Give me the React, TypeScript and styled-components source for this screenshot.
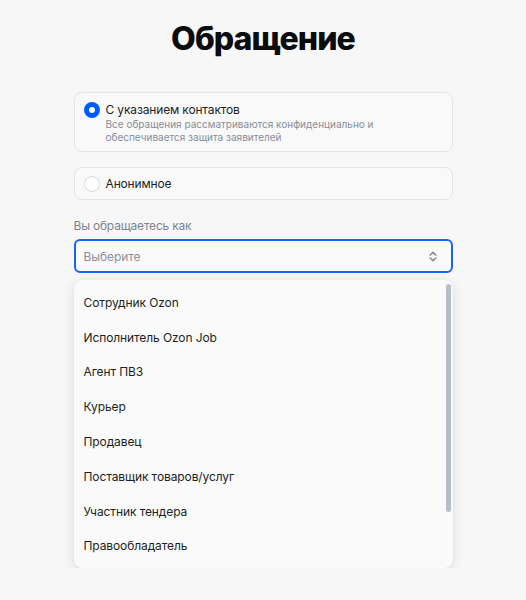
import React from 'react';
import styled, { createGlobalStyle } from 'styled-components';

const GlobalStyle = createGlobalStyle`
    body {
        margin: 0;
        background: #f7f7f8;
        font-family: Inter, 'Noto Sans', sans-serif;
        color: #1c1f24;
    }
`;

const Page = styled.div`
    width: 379px;
    margin: 0 auto;
    padding-top: 18px;
    display: flex;
    flex-direction: column;
`;

const Title = styled.h1`
    margin: 0 0 32px;
    text-align: center;
    font-size: 32px;
    line-height: 42px;
    font-weight: 800;
    letter-spacing: -0.9px;
    color: #0b0c0e;
`;

const Option = styled.label<{ $tall?: boolean }>`
    display: flex;
    align-items: flex-start;
    gap: 6px;
    box-sizing: border-box;
    height: ${p => (p.$tall ? '60px' : '33px')};
    padding: ${p => (p.$tall ? '9px 9px' : '8px 9px')};
    margin-bottom: 15px;
    border: 1px solid #e2e4e8;
    border-radius: 8px;
    background: #f9f9fa;
`;

const Radio = styled.span<{ $checked?: boolean }>`
    flex: none;
    box-sizing: border-box;
    width: 16px;
    height: 16px;
    border-radius: 50%;
    border: ${p => (p.$checked ? '5px solid #005bff' : '1.5px solid #d3d7dd')};
    background: #fff;
`;

const OptionText = styled.div`
    display: flex;
    flex-direction: column;
`;

const OptionTitle = styled.span`
    font-size: 12px;
    line-height: 16px;
    letter-spacing: -0.15px;
    color: #1c1f24;
`;

const OptionHint = styled.span`
    margin-top: 0;
    font-size: 10px;
    line-height: 13px;
    color: #878e98;
`;

const FieldLabel = styled.div`
    margin-top: 3px;
    font-size: 12px;
    line-height: 16px;
    letter-spacing: -0.2px;
    color: #7d848e;
`;

const Select = styled.div`
    box-sizing: border-box;
    height: 34px;
    margin-top: 5px;
    padding: 0 14px 0 8px;
    display: flex;
    align-items: center;
    justify-content: space-between;
    border: 2px solid #1a63f0;
    border-radius: 6px;
    background: #fafafb;
    font-size: 12px;
    letter-spacing: -0.1px;
    color: #8a9099;
`;

const Dropdown = styled.div`
    position: relative;
    box-sizing: border-box;
    height: 288px;
    margin-top: 7px;
    padding: 5px 0;
    border-radius: 8px;
    background: #fafafa;
    box-shadow: 0 3px 12px rgba(20, 30, 50, 0.12), 0 0 1px rgba(20, 30, 50, 0.12);
`;

const Item = styled.div`
    height: 34.8px;
    display: flex;
    align-items: center;
    padding: 0 10px;
    font-size: 12px;
    letter-spacing: -0.1px;
    color: #1c1f24;
`;

const Thumb = styled.div`
    position: absolute;
    top: 4px;
    right: 2px;
    width: 5px;
    height: 228px;
    border-radius: 3px;
    background: #b7bec7;
`;

const roles = [
    'Сотрудник Ozon',
    'Исполнитель Ozon Job',
    'Агент ПВЗ',
    'Курьер',
    'Продавец',
    'Поставщик товаров/услуг',
    'Участник тендера',
    'Правообладатель',
];

const UpDown = () => (
    <svg width="8" height="11" viewBox="0 0 8 11" fill="none">
        <path d="M1.2 4 L4 1.3 L6.8 4" stroke="#8a9099" strokeWidth="1.7" strokeLinecap="round" strokeLinejoin="round" />
        <path d="M1.2 7 L4 9.7 L6.8 7" stroke="#8a9099" strokeWidth="1.7" strokeLinecap="round" strokeLinejoin="round" />
    </svg>
);

const App = () => (
    <>
        <GlobalStyle />
        <Page>
            <Title>Обращение</Title>
            <Option $tall>
                <Radio $checked />
                <OptionText>
                    <OptionTitle>С указанием контактов</OptionTitle>
                    <OptionHint>
                        Все обращения рассматриваются конфиденциально и
                        <br />
                        обеспечивается защита заявителей
                    </OptionHint>
                </OptionText>
            </Option>
            <Option>
                <Radio />
                <OptionTitle>Анонимное</OptionTitle>
            </Option>
            <FieldLabel>Вы обращаетесь как</FieldLabel>
            <Select>
                Выберите
                <UpDown />
            </Select>
            <Dropdown>
                {roles.map(r => (
                    <Item key={r}>{r}</Item>
                ))}
                <Thumb />
            </Dropdown>
        </Page>
    </>
);

export default App;
